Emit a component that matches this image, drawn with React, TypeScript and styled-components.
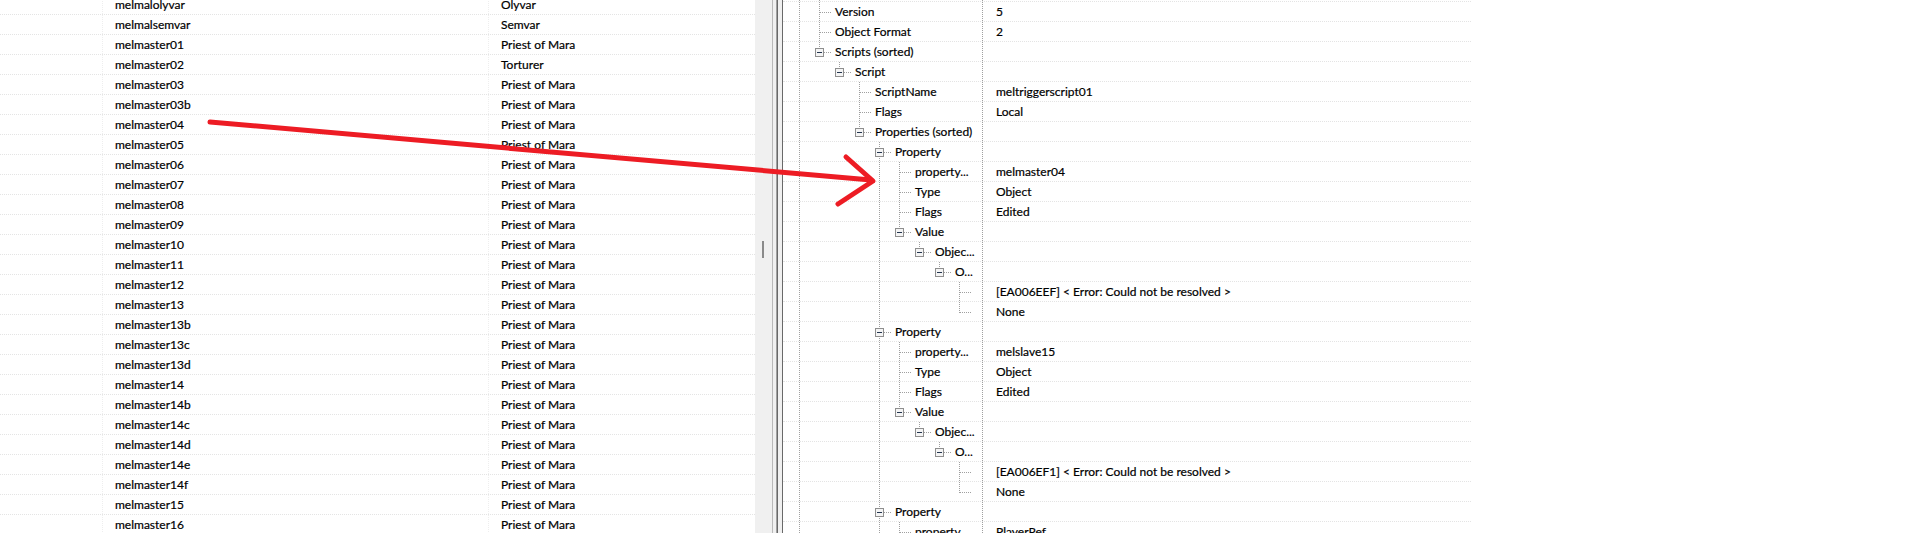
import React from "react";
import styled, { createGlobalStyle } from "styled-components";

const GlobalStyle = createGlobalStyle`
  html, body { margin: 0; padding: 0; background: #ffffff; }
  body {
    font-family: Lato, "Noto Sans", sans-serif;
    font-size: 12px;
    color: #000000;
    -webkit-text-stroke: 0.2px #000000;
    overflow: hidden;
  }
`;

const Window = styled.div`
  position: relative;
  display: flex;
  width: 1920px;
  height: 533px;
  overflow: hidden;
  background: #ffffff;
`;

/* ---------- left list ---------- */

const LeftPane = styled.div`
  flex: none;
  width: 755px;
  height: 533px;
  overflow: hidden;
  background: #ffffff;
`;

const ListBody = styled.div`
  margin-top: -5px;
`;

const ListRow = styled.div`
  display: grid;
  grid-template-columns: 103px 386px 266px;
  height: 20px;
  box-sizing: border-box;
  border-bottom: 1px dotted #e4e4e4;
`;

const ListCell = styled.div<{ $divider?: boolean }>`
  box-sizing: border-box;
  padding-left: 12px;
  line-height: 19px;
  white-space: nowrap;
  overflow: hidden;
  border-right: ${(p) => (p.$divider ? "1px dotted #eeeeee" : "none")};
`;

/* ---------- splitter ---------- */

const Splitter = styled.div`
  flex: none;
  width: 17px;
  height: 533px;
  box-sizing: border-box;
  padding: 241px 0 0 7px;
  background: #f0f0f0;
`;

const Grip = styled.div`
  width: 2px;
  height: 17px;
  background: #8a8a8a;
`;

const SunkenEdge = styled.div`
  flex: none;
  width: 11px;
  height: 533px;
  background: linear-gradient(
    to right,
    #b9b9b9 0px 1px,
    #f0f0f0 1px 4px,
    #a0a0a0 4px 5px,
    #696969 5px 6px,
    #f0f0f0 6px 10px,
    #696969 10px 11px
  );
`;

/* ---------- right tree ---------- */

const RightPane = styled.div`
  flex: none;
  width: 688px;
  height: 533px;
  overflow: hidden;
  background: #ffffff;
`;

const TreeBody = styled.div`
  margin-top: -18px;
`;

const TreeRow = styled.div`
  display: flex;
  height: 20px;
  box-sizing: border-box;
  border-bottom: 1px dotted #e4e4e4;
`;

const LabelCol = styled.div`
  flex: none;
  display: flex;
  align-items: flex-start;
  width: 199px;
  height: 19px;
  box-sizing: border-box;
  padding-left: 6px;
  overflow: hidden;
`;

const LabelText = styled.span`
  margin-left: 2px;
  line-height: 19px;
  white-space: nowrap;
`;

const ValueCol = styled.div`
  flex: 1;
  height: 19px;
  box-sizing: border-box;
  border-left: 1px dotted #a0a0a0;
  padding-left: 13px;
  line-height: 19px;
  white-space: nowrap;
  overflow: hidden;
`;

const LineSvg = styled.svg`
  flex: none;
  display: block;
`;

const ArrowLayer = styled.svg`
  position: absolute;
  left: 0;
  top: 0;
  pointer-events: none;
`;

const DOT = "#a0a0a0";

function Guide({ on }: { on: boolean }) {
  return (
    <LineSvg width="20" height="19" viewBox="0 0 20 19">
      {on && <line x1="10.5" y1="0" x2="10.5" y2="19" stroke={DOT} strokeDasharray="1 1" />}
    </LineSvg>
  );
}

function Branch({ open, last }: { open: boolean; last: boolean }) {
  if (open) {
    return (
      <LineSvg width="24" height="19" viewBox="0 0 24 19">
        <line x1="10.5" y1="0" x2="10.5" y2="6" stroke={DOT} strokeDasharray="1 1" />
        {!last && <line x1="10.5" y1="16" x2="10.5" y2="19" stroke={DOT} strokeDasharray="1 1" />}
        <line x1="15" y1="10.5" x2="22" y2="10.5" stroke={DOT} strokeDasharray="1 1" />
        <rect x="6.5" y="6.5" width="8" height="8" fill="#f4f4f4" stroke="#8f8f8f" />
        <line x1="8" y1="10.5" x2="13" y2="10.5" stroke="#22344f" />
      </LineSvg>
    );
  }
  return (
    <LineSvg width="24" height="19" viewBox="0 0 24 19">
      <line x1="10.5" y1="0" x2="10.5" y2={last ? 11 : 19} stroke={DOT} strokeDasharray="1 1" />
      <line x1="11" y1="10.5" x2="22" y2="10.5" stroke={DOT} strokeDasharray="1 1" />
    </LineSvg>
  );
}

type Node = { level: number; open?: boolean; last?: boolean; label: string; value?: string };

/* whether the ancestor at each level has further siblings (draws a through line) */
const CONT = [true, false, false, false, true, false, false, false];

const propertyBlock = (name: string, ref: string): Node[] => [
  { level: 4, open: true, label: "Property" },
  { level: 5, label: "property...", value: name },
  { level: 5, label: "Type", value: "Object" },
  { level: 5, label: "Flags", value: "Edited" },
  { level: 5, open: true, last: true, label: "Value" },
  { level: 6, open: true, last: true, label: "Objec..." },
  { level: 7, open: true, last: true, label: "O..." },
  { level: 8, label: "", value: `[${ref}] < Error: Could not be resolved >` },
  { level: 8, last: true, label: "", value: "None" },
];

const TREE: Node[] = [
  { level: 1, label: "" },
  { level: 1, label: "Version", value: "5" },
  { level: 1, label: "Object Format", value: "2" },
  { level: 1, open: true, last: true, label: "Scripts (sorted)" },
  { level: 2, open: true, last: true, label: "Script" },
  { level: 3, label: "ScriptName", value: "meltriggerscript01" },
  { level: 3, label: "Flags", value: "Local" },
  { level: 3, open: true, last: true, label: "Properties (sorted)" },
  ...propertyBlock("melmaster04", "EA006EEF"),
  ...propertyBlock("melslave15", "EA006EF1"),
  { level: 4, open: true, label: "Property" },
  { level: 5, label: "property...", value: "PlayerRef" },
];

const LIST: [string, string][] = [
  ["melmalolyvar", "Olyvar"],
  ["melmalsemvar", "Semvar"],
  ["melmaster01", "Priest of Mara"],
  ["melmaster02", "Torturer"],
  ["melmaster03", "Priest of Mara"],
  ["melmaster03b", "Priest of Mara"],
  ["melmaster04", "Priest of Mara"],
  ["melmaster05", "Priest of Mara"],
  ["melmaster06", "Priest of Mara"],
  ["melmaster07", "Priest of Mara"],
  ["melmaster08", "Priest of Mara"],
  ["melmaster09", "Priest of Mara"],
  ["melmaster10", "Priest of Mara"],
  ["melmaster11", "Priest of Mara"],
  ["melmaster12", "Priest of Mara"],
  ["melmaster13", "Priest of Mara"],
  ["melmaster13b", "Priest of Mara"],
  ["melmaster13c", "Priest of Mara"],
  ["melmaster13d", "Priest of Mara"],
  ["melmaster14", "Priest of Mara"],
  ["melmaster14b", "Priest of Mara"],
  ["melmaster14c", "Priest of Mara"],
  ["melmaster14d", "Priest of Mara"],
  ["melmaster14e", "Priest of Mara"],
  ["melmaster14f", "Priest of Mara"],
  ["melmaster15", "Priest of Mara"],
  ["melmaster16", "Priest of Mara"],
];

export default function App() {
  return (
    <>
      <GlobalStyle />
      <Window>
        <LeftPane>
          <ListBody>
            {LIST.map(([id, name]) => (
              <ListRow key={id}>
                <ListCell $divider />
                <ListCell $divider>{id}</ListCell>
                <ListCell>{name}</ListCell>
              </ListRow>
            ))}
          </ListBody>
        </LeftPane>
        <Splitter>
          <Grip />
        </Splitter>
        <SunkenEdge />
        <RightPane>
          <TreeBody>
            {TREE.map((n, i) => (
              <TreeRow key={i}>
                <LabelCol>
                  {CONT.slice(0, n.level).map((on, k) => (
                    <Guide key={k} on={on} />
                  ))}
                  <Branch open={!!n.open} last={!!n.last} />
                  <LabelText>{n.label}</LabelText>
                </LabelCol>
                <ValueCol>{n.value ?? ""}</ValueCol>
              </TreeRow>
            ))}
          </TreeBody>
        </RightPane>
        <ArrowLayer width="1920" height="533" viewBox="0 0 1920 533">
          <g stroke="#ed1c24" strokeWidth="5" strokeLinecap="round" strokeLinejoin="round" fill="none">
            <path d="M210 122 L871 180" />
            <path d="M846 157 L873 181 L838 204" />
          </g>
        </ArrowLayer>
      </Window>
    </>
  );
}
